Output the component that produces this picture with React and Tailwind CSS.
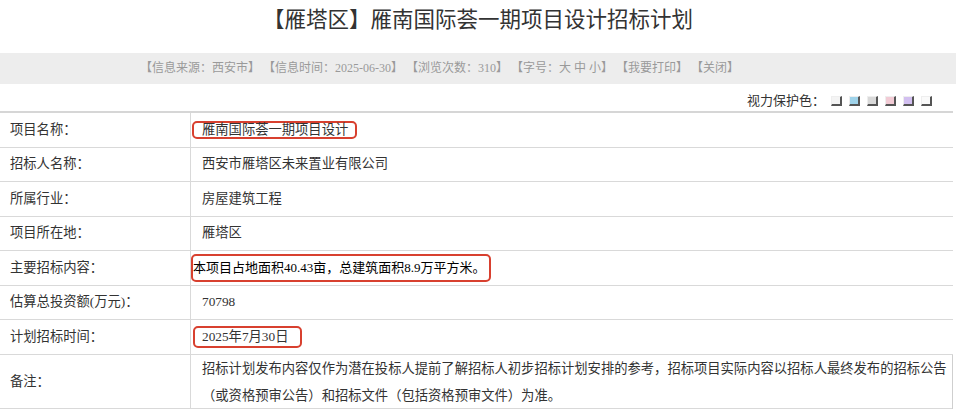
import React from 'react';

const swatches = [
    'bg-[#f4f4f4]',
    'bg-[#9fd3ea]',
    'bg-[#d9d9d9]',
    'bg-[#f2cbd5]',
    'bg-[#d2bff0]',
    'bg-[#fafafa]',
];

const Row = ({ label, children, last }) => (
    <div className={`grid grid-cols-[191px_1fr] border-b border-[#d9d9d9] ${last ? 'h-[54.5px]' : 'h-[34.5px]'}`}>
        <div className="flex items-center border-r border-[#d9d9d9] pl-[10px] text-[#333]">{label}</div>
        <div className={`flex items-center pl-[11px] text-[#333] ${last ? 'border-r border-[#cfcfcf]' : ''}`}>{children}</div>
    </div>
);

const App = () => {
    return (
        <div className="w-[956px] bg-white font-['Liberation_Serif','Noto_Sans_CJK_SC',serif] text-[#333]">
            <h1 className="h-[53px] pt-[6px] text-center text-[21.5px] leading-[28px] font-normal text-[#333]">
                【雁塔区】雁南国际荟一期项目设计招标计划
            </h1>

            <div className="h-[31px] bg-[#ededed] pl-[140px] text-[12px] leading-[31px] text-[#9a9a9a] whitespace-nowrap">
                【信息来源：西安市】 【信息时间：2025-06-30】 【浏览次数：310】 【字号：大 中 小】 【我要打印】 【关闭】
            </div>

            <div className="flex h-[27px] w-[953px] items-center justify-end pt-[6px] pr-[21px]">
                <span className="mr-[6px] text-[13px] text-[#333]">视力保护色：</span>
                <div className="flex gap-[7px]">
                    {swatches.map((c) => (
                        <span
                            key={c}
                            className={`block h-[10px] w-[11px] border-r-2 border-b-2 border-t border-l border-t-[#eee] border-l-[#eee] border-r-[#555] border-b-[#555] ${c}`}
                        />
                    ))}
                </div>
            </div>

            {/* detail table */}
            <div className="w-[953px] border-t-2 border-[#d6d6d6] text-[13.3px]">
                <Row label="项目名称：">
                    <span className="-ml-[10px] inline-block rounded-[5px] border-2 border-[#d8402f] pl-[8px] pr-[7px] leading-[14px]">
                        雁南国际荟一期项目设计
                    </span>
                </Row>
                <Row label="招标人名称：">西安市雁塔区未来置业有限公司</Row>
                <Row label="所属行业：">房屋建筑工程</Row>
                <Row label="项目所在地：">雁塔区</Row>
                <Row label="主要招标内容：">
                    <span className="-ml-[11px] inline-block rounded-[5px] border-2 border-[#d8402f] py-[2px] pr-[3px] text-[13px] leading-[20px] text-black">
                        本项目占地面积40.43亩，总建筑面积8.9万平方米。
                    </span>
                </Row>
                <Row label="估算总投资额(万元)：">70798</Row>
                <Row label="计划招标时间：">
                    <span className="-ml-[9px] inline-block rounded-[5px] border-2 border-[#d8402f] py-[2px] pl-[7px] pr-[12px] leading-[14px]">
                        2025年7月30日
                    </span>
                </Row>
                <Row label="备注：" last>
                    <p className="leading-[27px]">
                        招标计划发布内容仅作为潜在投标人提前了解招标人初步招标计划安排的参考，招标项目实际内容以招标人最终发布的招标公告
                        <br />
                        （或资格预审公告）和招标文件（包括资格预审文件）为准。
                    </p>
                </Row>
            </div>
        </div>
    );
};

export default App;
